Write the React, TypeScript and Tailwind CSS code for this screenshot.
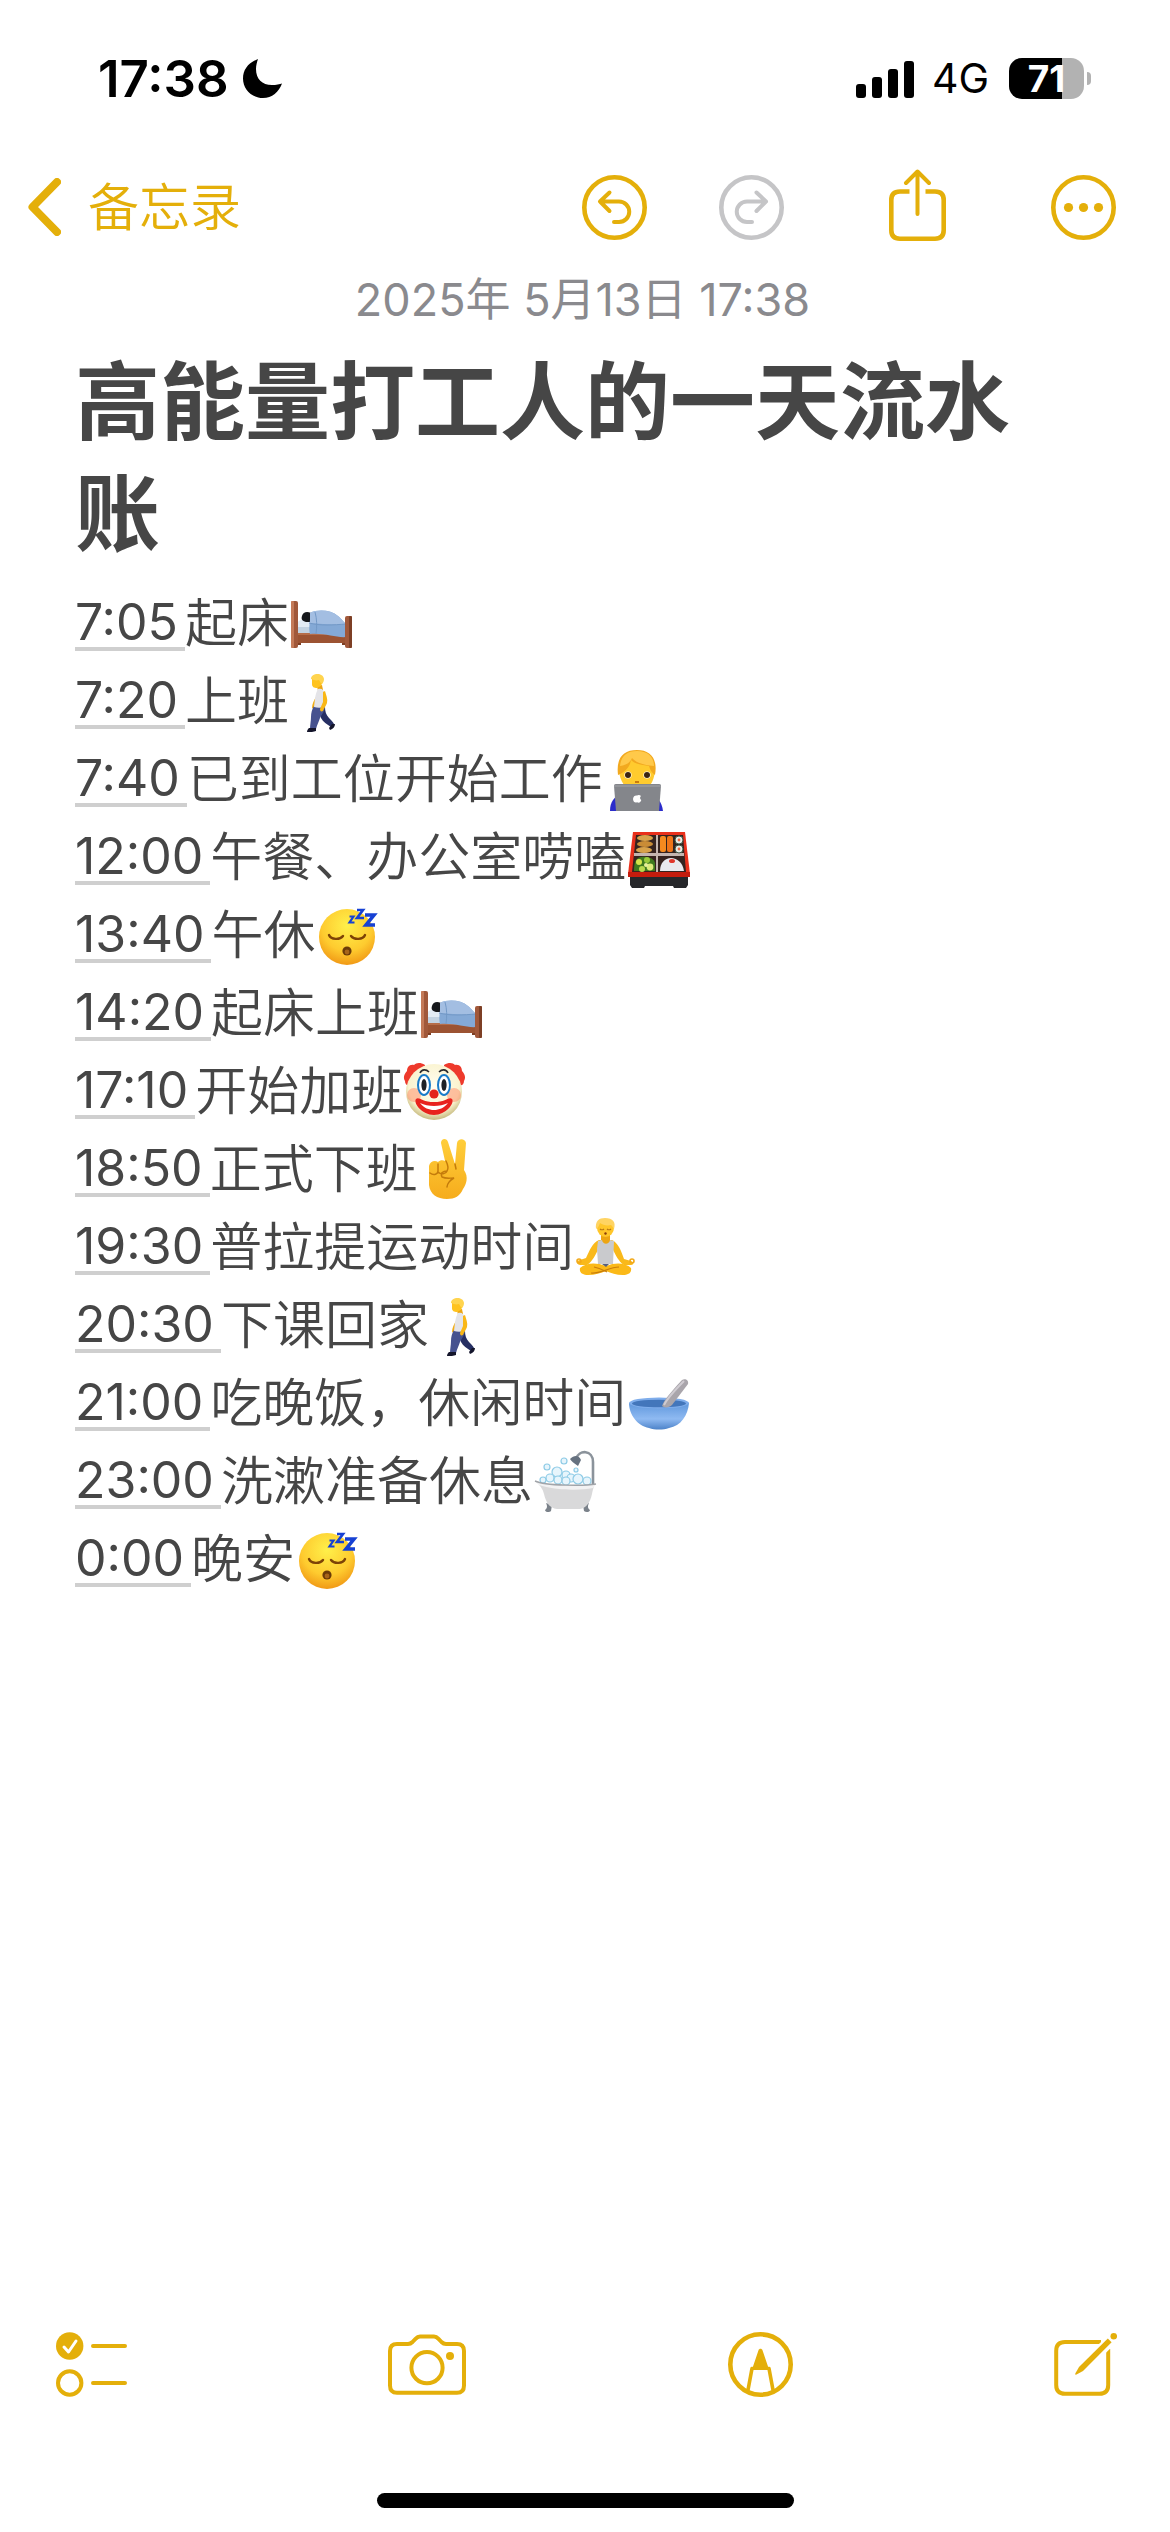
import { FC, ReactNode } from 'react';

const SleepingBed: FC = () => (
  <>
    <path d="M8 40h49v11H8z" fill="#9c5332" />
    <path d="M8 40h49v3H8z" fill="#b66d49" />
    <path d="M7 34h16v7H7z" fill="#c3d3e2" />
    <path d="M8 31c3-4 8-5 14-3v7H8z" fill="#e3ecf5" />
    <path d="M13 24c1-4 5-5 9-3v9h-5c-4-1-5-3-4-6z" fill="#16181c" />
    <path d="M21 21c8-4 21-3 28 3 4 3 6 7 9 8v13c-12 1-20-4-37-3-2-7 1-14 0-21z" fill="#84a9d6" />
    <path d="M21 21c8-4 21-3 28 3 4 3 5 6 8 8-10 1-24 0-36-1z" fill="#a3bee2" />
    <path d="M20 31c12 3 24 2 37 1M26 20c2 7 2 14 1 22" stroke="#7399c7" strokeWidth="1" fill="none" />
    <rect x="2" y="9" width="7" height="47" rx="2" fill="#a1583a" />
    <rect x="2" y="9" width="3" height="47" rx="1" fill="#c47a58" />
    <rect x="56" y="24" width="7" height="32" rx="2" fill="#a1583a" />
    <rect x="60" y="24" width="3" height="32" rx="1" fill="#7d3f25" />
    <path d="M9 51h3v2H9zM53 51h3v2h-3z" fill="#7d3f25" />
  </>
);

const Walking: FC = () => (
  <>
    <path d="M27 27l2 3c-1 4-2 6-4 9l-2-1c0-4 2-8 4-11z" fill="#f2ad14" />
    <path d="M29 37h7c0 4 1 8 4 11 2 2 4 4 5 6l-3 3c-4-3-8-5-10-9z" fill="#262f63" />
    <path d="M25 36h11c0 5-3 8-5 12-1 3-3 7-4 11h-6c0-4 1-8 1-12 0-4 1-8 3-11z" fill="#46528f" />
    <path d="M20 58h7v3c-2 1-6 1-9 1 0-2 1-3 2-4zM43 54l3 0c0 3-2 5-5 6l-1-2z" fill="#14152b" />
    <path d="M28 16l5-1 1 5-5 1z" fill="#eda512" />
    <path d="M29 19c4-1 6 1 7 5v13c-4 1-8 1-11 0 1-7 1-13 4-18z" fill="#e4e4e8" />
    <path d="M34 22l2-1c1 4 3 8 2 12-1 3-3 5-4 8-2 1-3 0-3-2l3-7z" fill="#f9b716" />
    <path d="M23 8c4-3 10-2 11 3-1 4-3 6-6 7-3 0-5-1-5-4z" fill="#ffc31f" />
    <path d="M22 9c0-6 12-7 13 0 0 2-1 4-2 5-2-1-2-3-3-4-3 1-5 0-8-1z" fill="#ffd44f" />
  </>
);

const Technologist: FC = () => (
  <>
    <path d="M7 63c0-9 4-15 12-17h26c9 1 14 8 15 17z" fill="#2b2ccb" />
    <path d="M16 20c0-12 8-17 18-17s18 6 18 17c0 15-8 24-18 24S16 34 16 20z" fill="#ffcb2e" />
    <path d="M15 27C13 10 20 2 34 2c13 0 21 8 18 25-3-2-5-5-6-9-8-1-14-2-18-6-1 7-6 12-13 15z" fill="#f2a91f" />
    <path d="M17 18C18 8 24 3 34 3c11 0 17 6 17 15-8-1-17-2-22-8-2 5-6 7-12 8z" fill="#ffc94a" />
    <circle cx="25" cy="27" r="3.6" fill="#fff" />
    <circle cx="44" cy="27" r="3.6" fill="#fff" />
    <circle cx="25" cy="27" r="3" fill="#3b2410" />
    <circle cx="44" cy="27" r="3" fill="#3b2410" />
    <path d="M32 34h4" stroke="#c97b0d" strokeWidth="2" />
    <path d="M13 36h43c2 0 2 1 2 2l-2 25H13l-2-25c0-1 0-2 2-2z" fill="#84868b" />
    <path d="M11 38h47" stroke="#a2a4a8" strokeWidth="1" />
    <path d="M34 47.500c1.500-1 3-.5 4 .5-1.500 1.500-1 3 .3 4-1 3-2.300 3-4.300 2.300-2 .7-3.800-.3-4-3.300.3-3 2.300-4 4-3.500z" fill="#fff" />
  </>
);

const Bento: FC = () => (
  <>
    <path d="M4 50h58v9l-2 3H48l-1-2H19l-1 2H6l-2-3z" fill="#26272a" />
    <path d="M7 6h52l5 42v3H2v-3z" fill="#e8301b" />
    <path d="M2 46h62v5H2z" fill="#c41c0d" />
    <path d="M10 9h47l3 37H6z" fill="#35231f" />
    <path d="M30 9h2v37h-2zM8 27h50v3H8z" fill="#c4b5af" />
    <ellipse cx="19" cy="12" rx="8" ry="3" fill="#d8a24b" />
    <ellipse cx="19" cy="18" rx="8" ry="3" fill="#c98c36" />
    <ellipse cx="18" cy="24" rx="8" ry="3" fill="#d8a24b" />
    <rect x="34" y="10" width="6" height="16" rx="2" fill="#f58a1f" />
    <rect x="41" y="10" width="6" height="16" rx="2" fill="#ef7418" />
    <circle cx="53" cy="14" r="4" fill="#e9ece8" stroke="#3d5744" />
    <circle cx="53" cy="23" r="4" fill="#e9ece8" stroke="#3d5744" />
    <circle cx="53" cy="14" r="1.4" fill="#ef6a44" />
    <circle cx="53" cy="23" r="1.4" fill="#ef6a44" />
    <path d="M8 45c0-7 1-13 7-14 6-1 13 1 14 6v8z" fill="#3f7a1e" />
    <circle cx="13" cy="36" r="3" fill="#d5e34a" />
    <circle cx="21" cy="34" r="3" fill="#9acb3c" />
    <circle cx="24" cy="41" r="3.4" fill="#dcea7a" />
    <circle cx="16" cy="43" r="3" fill="#b9d94f" />
    <circle cx="20" cy="39" r="2" fill="#e8f09a" />
    <path d="M34 45c0-8 5-13 11-13s12 5 13 13z" fill="#e9e9ee" />
    <ellipse cx="46" cy="35" rx="3" ry="2" fill="#e0372c" />
  </>
);

const Sleeping: FC = () => (
  <>
    <defs>
      <radialGradient id="sleepingFace" cx="0.5" cy="0.3" r="0.75">
        <stop offset="0" stopColor="#fff04a" />
        <stop offset="0.6" stopColor="#fecb2f" />
        <stop offset="1" stopColor="#ee8f10" />
      </radialGradient>
    </defs>
    <circle cx="32" cy="33" r="28" fill="url(#sleepingFace)" />
    <path d="M14 31c2 5 11 5 14 1M36 32c3 4 12 4 14-1" stroke="#7d4306" strokeWidth="2.4" fill="none" strokeLinecap="round" />
    <circle cx="32" cy="47" r="4.6" fill="#6b3b08" />
    <circle cx="32" cy="48" r="2.4" fill="#a7651a" />
    <g fill="none" stroke="#1741d3">
      <path d="M34.5 12.5h4l-4 6h5" strokeWidth="2.2" />
      <path d="M42 6h6l-6 8h7" strokeWidth="2.6" />
      <path d="M50 11h9l-8 10h9" strokeWidth="3.6" />
    </g>
  </>
);

const Clown: FC = () => (
  <>
    <defs>
      <radialGradient id="clownFace" cx="0.5" cy="0.4" r="0.6">
        <stop offset="0" stopColor="#fffef0" />
        <stop offset="0.75" stopColor="#faf3cf" />
        <stop offset="1" stopColor="#c6ba7f" />
      </radialGradient>
    </defs>
    <path d="M22 5C17 2 13 3 11 5 6 4 4 8 4 11c-3 3-4 7-2 10 0 3 2 5 4 4l16-17zM41 5c5-3 9-2 11 0 5-1 7 3 7 6 3 3 4 7 2 10 0 3-2 5-4 4L41 8z" fill="#ee3a2c" />
    <circle cx="31" cy="32" r="28" fill="url(#clownFace)" />
    <circle cx="11" cy="35" r="7" fill="#ff8a66" opacity="0.5" />
    <circle cx="51" cy="35" r="7" fill="#ff8a66" opacity="0.5" />
    <ellipse cx="21" cy="25" rx="6" ry="10" fill="#fff" stroke="#1a7cc9" strokeWidth="2" />
    <ellipse cx="41" cy="25" rx="6" ry="10" fill="#fff" stroke="#1a7cc9" strokeWidth="2" />
    <ellipse cx="21" cy="25" rx="2.6" ry="6" fill="#1f2226" />
    <ellipse cx="41" cy="25" rx="2.6" ry="6" fill="#1f2226" />
    <path d="M17 13c2-4 6-4 9-1M36 12c3-3 7-3 9 1" stroke="#2c2c2c" strokeWidth="1.6" fill="none" />
    <circle cx="31" cy="34" r="4.6" fill="#e3231c" />
    <path d="M13 39c3-3 6 3 18 3s15-6 18-3c3 4-6 16-18 16S10 43 13 39z" fill="#e8231d" />
    <path d="M17 43c8 4 20 4 28 0-4 5-9 7-14 7s-10-2-14-7z" fill="#fff" />
  </>
);

const Victory: FC = () => (
  <>
    <defs>
      <linearGradient id="victoryHand" x1="0" y1="0" x2="0" y2="1">
        <stop offset="0" stopColor="#ffce3a" />
        <stop offset="1" stopColor="#f6ac1c" />
      </linearGradient>
    </defs>
    <path
      d="M23 5c0-5 6-5 7-1l7 22 2-21c1-5 8-5 9 0l-2 27c5 7 2 15-1 19-3 7-8 10-16 10-10 0-17-5-18-14V28c1-5 6-6 9-4 2-2 5-2 7-1z"
      fill="url(#victoryHand)"
    />
    <path
      d="M12 35c4 3 8 1 8-2v-7M20 34c3 3 8 2 9-1M28 23c2 4 3 7 1 10-4 0-7 2-5 6 4 2 8 1 12 1-4 2-7 6-7 9M37 26l1 5"
      fill="none"
      stroke="#c47b0b"
      strokeWidth="1.5"
      strokeLinecap="round"
    />
  </>
);

const Yoga: FC = () => (
  <>
    <path d="M25 24h13c6 3 9 10 12 19l7 2c3 1 3 4 0 4h-7c-6-4-8-10-11-15H24c-3 5-5 11-11 15H6c-5-1-3-5 0-5l6-2c4-8 6-15 13-18z" fill="#f9b91b" />
    <path d="M27 18h9v10h-9z" fill="#eda512" />
    <path d="M24 25l4-1c1 5 7 5 8 0l4 1-1 23H24l-1-15z" fill="#c9cacd" />
    <path d="M6 52c6-5 15-6 26-2 10-4 20-3 25 2 1 5-3 7-8 7-7 0-12-2-17-4-5 2-11 4-18 4-5 0-9-2-8-7z" fill="#fbb918" />
    <path d="M17 57c10 1 18-6 28-6M20 51c6 1 9 3 13 5" stroke="#c97d0a" strokeWidth="1.2" fill="none" />
    <path d="M28 48h7l-3 3z" fill="#59607c" />
    <circle cx="5" cy="45" r="2" fill="none" stroke="#f2a91a" strokeWidth="1.6" />
    <circle cx="58" cy="45" r="2" fill="none" stroke="#f2a91a" strokeWidth="1.6" />
    <ellipse cx="31.5" cy="12" rx="8.5" ry="9" fill="#ffc62a" />
    <path d="M22 13c-1-8 3-11 9-11 8 0 11 4 9 11-1-2-2-3-3-4-4 1-8 0-11-2-1 3-2 5-4 6z" fill="#ffd463" />
    <path d="M26 13c1 1 3 1 4 0M33 13c1 1 3 1 4 0" stroke="#b87712" strokeWidth="1.1" fill="none" />
    <circle cx="31.5" cy="17.5" r="1.2" fill="#8a3f0a" />
  </>
);

const Bowl: FC = () => (
  <>
    <defs>
      <linearGradient id="bowlSide" x1="0" y1="0" x2="0" y2="1">
        <stop offset="0" stopColor="#5f97dc" />
        <stop offset="0.6" stopColor="#8fbaf2" />
        <stop offset="1" stopColor="#4d83c9" />
      </linearGradient>
    </defs>
    <path d="M3 31c0 12 9 23 20 25 6 2 14 2 20 0 12-2 19-13 20-25z" fill="url(#bowlSide)" />
    <ellipse cx="33" cy="31" rx="30" ry="5.5" fill="#7fadeb" />
    <ellipse cx="33" cy="31.5" rx="27" ry="3.8" fill="#4376bb" />
    <path d="M36 34c2-6 9-14 20-26 3-2 7 0 6 4L46 33c-3 3-8 3-10 1z" fill="#a9a5ab" />
    <path d="M38 33c3-6 11-15 20-24" stroke="#cfcbd1" strokeWidth="2" fill="none" />
  </>
);

const Bathtub: FC = () => (
  <>
    <path d="M60 34V12c0-12-14-13-17-3" stroke="#8b939b" strokeWidth="2.6" fill="none" />
    <path d="M37 9c4-4 9-4 11 1l-3 6c-4-3-7-5-8-7z" fill="#667280" />
    <g fill="#e7f5fc" stroke="#8ecbe6" strokeWidth="1.2">
      <circle cx="31" cy="11" r="3" />
      <circle cx="14" cy="17" r="3" />
      <circle cx="43" cy="20" r="2" />
      <circle cx="33" cy="25" r="4" />
      <circle cx="24" cy="22" r="5" />
      <circle cx="17" cy="28" r="4" />
      <circle cx="10" cy="30" r="3" />
      <circle cx="25" cy="30" r="4" />
      <circle cx="38" cy="28" r="4" />
      <circle cx="45" cy="29" r="5" />
      <circle cx="54" cy="31" r="4" />
      <circle cx="33" cy="31" r="4" />
    </g>
    <path d="M13 53l6 2-1 6c-2 2-6 1-6-1 3-2 2-5 1-7zM56 53l-6 2 1 6c2 2 6 1 6-1-3-2-2-5-1-7z" fill="#7b828a" />
    <path d="M2 31c10 5 50 5 61 3-2 1-3 5-4 10-2 9-6 14-12 15H24c-8-1-11-7-13-15-1-5-4-9-9-13z" fill="#d9d9da" />
    <path d="M2 31c10 5 50 5 61 3l-3 4c-15 3-40 2-54-3z" fill="#f2f2f3" />
    <path d="M2 31c10 5 50 5 61 3" stroke="#a0a4a9" strokeWidth="1.4" fill="none" />
  </>
);

interface Entry {
  time: string;
  text: string;
  label: string;
  Emoji: FC;
}

const entries: Entry[] = [
  { time: '7:05', text: '起床', label: '睡觉', Emoji: SleepingBed },
  { time: '7:20', text: '上班', label: '步行', Emoji: Walking },
  { time: '7:40', text: '已到工位开始工作', label: '电脑办公', Emoji: Technologist },
  { time: '12:00', text: '午餐、办公室唠嗑', label: '便当', Emoji: Bento },
  { time: '13:40', text: '午休', label: '睡着', Emoji: Sleeping },
  { time: '14:20', text: '起床上班', label: '睡觉', Emoji: SleepingBed },
  { time: '17:10', text: '开始加班', label: '小丑', Emoji: Clown },
  { time: '18:50', text: '正式下班', label: '胜利', Emoji: Victory },
  { time: '19:30', text: '普拉提运动时间', label: '打坐', Emoji: Yoga },
  { time: '20:30', text: '下课回家', label: '步行', Emoji: Walking },
  { time: '21:00', text: '吃晚饭，休闲时间', label: '碗', Emoji: Bowl },
  { time: '23:00', text: '洗漱准备休息', label: '浴缸', Emoji: Bathtub },
  { time: '0:00', text: '晚安', label: '睡着', Emoji: Sleeping },
];

const StatusBar: FC = () => (
  <div className="flex h-[141px] items-center justify-between pt-4 pr-[79px] pl-[98px] text-black">
    <div className="flex items-center gap-[14px]">
      <span className="text-[51px] leading-none font-semibold">17:38</span>
      <svg width="39" height="39" viewBox="0 0 39 39" aria-hidden="true">
        <path d="M15 0C5 4 0 11 0 19.5 0 30 8.500 39 20 39c9 0 16-6 19-14.500-2 .8-6 1.500-10 1.500-10 0-16-6-16-16 0-4 1-7 2-10z" />
      </svg>
    </div>
    <div className="flex items-center">
      <svg width="58" height="38" viewBox="0 0 58 38" aria-hidden="true">
        <rect x="0" y="24" width="10" height="14" rx="3" />
        <rect x="16" y="17" width="10" height="21" rx="3" />
        <rect x="32" y="9" width="10" height="29" rx="3" />
        <rect x="48" y="1" width="10" height="37" rx="3" />
      </svg>
      <span className="ml-[18px] text-[41px] leading-none">4G</span>
      <span className="ml-5 flex h-[41px] w-[75px] items-center justify-center rounded-[13px] bg-[linear-gradient(90deg,#000_53px,#b2b2b2_53px)] text-[37px] leading-none font-bold text-white">
        71
      </span>
      <span className="ml-[3px] h-[13px] w-1 rounded-r-full bg-[#b2b2b2]" />
    </div>
  </div>
);

interface IconButtonProps {
  label: string;
  width: number;
  height: number;
  disabled?: boolean;
  children: ReactNode;
}

const IconButton: FC<IconButtonProps> = ({ label, width, height, disabled, children }) => (
  <button type="button" aria-label={label} disabled={disabled} className="text-[#e4af0a] disabled:text-[#c5c5c7]">
    <svg
      width={width}
      height={height}
      viewBox={`0 0 ${width} ${height}`}
      fill="none"
      stroke="currentColor"
      strokeWidth="4"
      strokeLinecap="round"
      strokeLinejoin="round"
      aria-hidden="true"
    >
      {children}
    </svg>
  </button>
);

const NavBar: FC = () => (
  <header className="flex h-[132px] items-center justify-between pr-[54px] pl-7">
    <a href="#notes" className="flex items-center gap-[27px] text-[#e4af0a]">
      <svg
        width="33"
        height="58"
        viewBox="0 0 33 58"
        fill="none"
        stroke="currentColor"
        strokeWidth="8"
        strokeLinecap="round"
        strokeLinejoin="round"
        aria-hidden="true"
      >
        <path d="M29 4L4.5 29 29 54" />
      </svg>
      <span className="text-[51px] leading-none font-[350]">备忘录</span>
    </a>
    <div className="flex items-center gap-[105px]">
      <div className="flex gap-[72px]">
        <IconButton label="撤销" width={65} height={65}>
          <circle cx="32.5" cy="32.5" r="30.2" strokeWidth="4.6" />
          <path d="M27.500 17.500L18 26.500l9.500 9.500M18 26.500h19a10 10 0 0 1 0 20.500h-5" />
        </IconButton>
        <IconButton label="重做" width={65} height={65} disabled>
          <circle cx="32.5" cy="32.5" r="30.2" strokeWidth="4.6" />
          <path d="M37.500 17.500l9.500 9-9.500 9.500M47 26.500H28a10 10 0 0 0 0 20.500h5" />
        </IconButton>
      </div>
      <IconButton label="共享" width={57} height={76}>
        <path d="M28.500 3v42M17 14L28.500 2.500 40 14" />
        <path
          d="M20.500 22.500H11c-6 0-8.700 2.700-8.700 8.500v30c0 6 2.700 8.700 8.700 8.700h35c6 0 8.700-2.700 8.700-8.700V31c0-5.800-2.700-8.500-8.700-8.500h-9.500"
          strokeWidth="4.6"
          strokeLinecap="butt"
        />
      </IconButton>
      <IconButton label="更多" width={65} height={65}>
        <circle cx="32.5" cy="32.5" r="30.2" strokeWidth="4.6" />
        <g fill="currentColor" stroke="none">
          <circle cx="17.5" cy="32.5" r="4.6" />
          <circle cx="32.5" cy="32.5" r="4.6" />
          <circle cx="47.5" cy="32.5" r="4.6" />
        </g>
      </IconButton>
    </div>
  </header>
);

const Toolbar: FC = () => (
  <div className="flex items-center justify-between pr-[53px] pl-14">
    <IconButton label="核对清单" width={71} height={65}>
      <circle cx="13.7" cy="14" r="13.7" fill="currentColor" stroke="none" />
      <path d="M8 15l4.500 5L20 9" stroke="#fff" strokeWidth="3" />
      <circle cx="13.7" cy="51" r="11.7" />
      <path d="M37 14h32M37 51h32" />
    </IconButton>
    <IconButton label="相机" width={78} height={61}>
      <path d="M9 10h11c2 0 3-.5 4.500-2l3-3.200C29 3.200 30 2.500 32 2.500h14c2 0 3 .7 4.500 2.300l3 3.200c1.500 1.500 2.500 2 4.500 2h11c5 0 7 2.500 7 7v34.500c0 5-2 7.300-7 7.300H9c-5 0-7-2.300-7-7.300V17c0-4.500 2-7 7-7z" />
      <circle cx="39" cy="33.7" r="15.6" />
      <circle cx="62" cy="22" r="4" fill="currentColor" stroke="none" />
    </IconButton>
    <IconButton label="标记" width={65} height={65}>
      <circle cx="32.5" cy="32.5" r="30.2" strokeWidth="4.6" />
      <path d="M30.500 18.200c.6-2 3.400-2 4 0l5.500 16.300 2.500 3.500h-20l2.500-3.500z" fill="currentColor" stroke="none" />
      <path d="M24 36.500L20 58M41 36.500L45 58" strokeWidth="3.6" />
    </IconButton>
    <IconButton label="新建备忘录" width={63} height={63}>
      <path d="M47 9H11c-6 0-8.800 2.800-8.800 8.800V52c0 6 2.800 8.800 8.800 8.800h34.500c6 0 8.700-2.800 8.700-8.800V16" strokeLinecap="butt" />
      <path d="M56 8L25 38.500" stroke="#fff" strokeWidth="11" strokeLinecap="butt" />
      <path d="M53.800 5.400l3.800 3.800L29 38l-6.500 3.600c-.9.300-1.500-.3-1.200-1.200L25 34z" fill="currentColor" stroke="none" />
      <circle cx="59.8" cy="3.3" r="3.3" fill="currentColor" stroke="none" />
    </IconButton>
  </div>
);

export default function App() {
  return (
    <div className="flex min-h-screen flex-col bg-white font-[Inter,'Noto_Sans_CJK_SC',sans-serif]">
      <StatusBar />
      <NavBar />
      <main className="flex-1 pr-20 pl-[75px]">
        <p className="text-center text-[45px] leading-[54px] text-[#8a8a8e]">2025年 5月13日 17:38</p>
        <h1 className="mt-5 text-[85px] leading-[112px] font-bold text-[#464646]">高能量打工人的一天流水账</h1>
        <ul className="mt-[14px] text-[52px] leading-[78px] text-[#464646]">
          {entries.map(({ time, text, label, Emoji }) => (
            <li key={time} className="flex h-[78px] items-center">
              <a href="#time" className="flex h-[54px] items-center border-b-4 border-[#cfcfcf] pr-[7px] text-[50px] leading-none">
                {time}
              </a>
              <span className="font-[350]">{text}</span>
              <svg width="64" height="64" viewBox="0 0 64 64" role="img" aria-label={label} className="shrink-0">
                <Emoji />
              </svg>
            </li>
          ))}
        </ul>
      </main>
      <footer className="flex flex-col items-center gap-[96px] pb-6">
        <div className="w-full">
          <Toolbar />
        </div>
        <div className="h-[15px] w-[417px] rounded-full bg-black" />
      </footer>
    </div>
  );
}
